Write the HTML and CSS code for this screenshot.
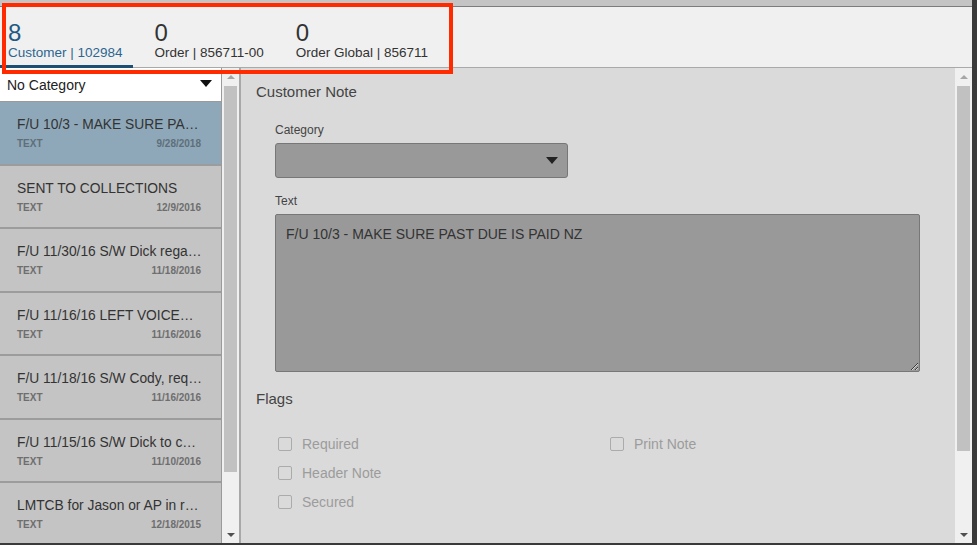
FILE: index.html
```html
<!DOCTYPE html>
<html>
<head>
<meta charset="utf-8">
<link rel="stylesheet" href="styles.css">
</head>
<body>
<div class="window">
  <div class="topband"></div>
  <div class="header">
    <div class="tab active">
      <div class="tab-count">8</div>
      <div class="tab-label">Customer | 102984</div>
    </div>
    <div class="tab">
      <div class="tab-count">0</div>
      <div class="tab-label">Order | 856711-00</div>
    </div>
    <div class="tab">
      <div class="tab-count">0</div>
      <div class="tab-label">Order Global | 856711</div>
    </div>
  </div>
  <div class="main">
    <div class="left">
      <div class="list">
        <div class="cat-select">
          <span>No Category</span>
          <svg class="caret" width="12" height="7" viewBox="0 0 12 7"><path d="M0 0H12L6 7Z" fill="#111"/></svg>
        </div>
        <div class="item selected">
          <div class="item-title">F/U 10/3 - MAKE SURE PA…</div>
          <div class="item-meta"><span>TEXT</span><span>9/28/2018</span></div>
        </div>
        <div class="item">
          <div class="item-title">SENT TO COLLECTIONS</div>
          <div class="item-meta"><span>TEXT</span><span>12/9/2016</span></div>
        </div>
        <div class="item">
          <div class="item-title">F/U 11/30/16 S/W Dick rega…</div>
          <div class="item-meta"><span>TEXT</span><span>11/18/2016</span></div>
        </div>
        <div class="item">
          <div class="item-title">F/U 11/16/16 LEFT VOICE…</div>
          <div class="item-meta"><span>TEXT</span><span>11/16/2016</span></div>
        </div>
        <div class="item">
          <div class="item-title">F/U 11/18/16 S/W Cody, req…</div>
          <div class="item-meta"><span>TEXT</span><span>11/16/2016</span></div>
        </div>
        <div class="item">
          <div class="item-title">F/U 11/15/16 S/W Dick to c…</div>
          <div class="item-meta"><span>TEXT</span><span>11/10/2016</span></div>
        </div>
        <div class="item">
          <div class="item-title">LMTCB for Jason or AP in r…</div>
          <div class="item-meta"><span>TEXT</span><span>12/18/2015</span></div>
        </div>
      </div>
      <div class="scrollbar left-sb">
        <div class="sb-btn"><svg width="8" height="4" viewBox="0 0 8 4"><path d="M0 4H8L4 0Z" fill="#a6a6a6"/></svg></div>
        <div class="sb-thumb"></div>
        <div class="sb-track"></div>
        <div class="sb-btn"><svg width="8" height="4" viewBox="0 0 8 4"><path d="M0 0H8L4 4Z" fill="#505050"/></svg></div>
      </div>
    </div>
    <div class="detail">
      <div class="detail-body">
        <div class="section-title">Customer Note</div>
        <div class="field">
          <div class="field-label">Category</div>
          <div class="select">
            <svg class="caret" width="12" height="7" viewBox="0 0 12 7"><path d="M0 0H12L6 7Z" fill="#222"/></svg>
          </div>
        </div>
        <div class="field">
          <div class="field-label">Text</div>
          <textarea class="note-text" readonly>F/U 10/3 - MAKE SURE PAST DUE IS PAID NZ</textarea>
        </div>
        <div class="section-title flags-title">Flags</div>
        <div class="flags">
          <div class="flag-col">
            <label class="flag"><span class="box"></span>Required</label>
            <label class="flag"><span class="box"></span>Header Note</label>
            <label class="flag"><span class="box"></span>Secured</label>
          </div>
          <div class="flag-col">
            <label class="flag"><span class="box"></span>Print Note</label>
          </div>
        </div>
      </div>
      <div class="scrollbar right-sb">
        <div class="sb-btn"><svg width="8" height="4" viewBox="0 0 8 4"><path d="M0 4H8L4 0Z" fill="#a6a6a6"/></svg></div>
        <div class="sb-thumb"></div>
        <div class="sb-track"></div>
        <div class="sb-btn"><svg width="8" height="4" viewBox="0 0 8 4"><path d="M0 0H8L4 4Z" fill="#505050"/></svg></div>
      </div>
    </div>
  </div>
  <div class="annotation"></div>
</div>
</body>
</html>
```
FILE: styles.css
```css
* { box-sizing: border-box; }
html, body { margin: 0; padding: 0; }
body {
  width: 977px;
  height: 545px;
  overflow: hidden;
  background: #3a3a3a;
  font-family: "Liberation Sans", Arial, sans-serif;
}
.window {
  position: relative;
  width: 972px;
  height: 543px;
  display: flex;
  flex-direction: column;
  background: #dadada;
}
.topband {
  height: 7px;
  background: #c4c4c4;
  border-bottom: 1px solid #7c7c7c;
  flex: none;
}
.header {
  flex: none;
  height: 61px;
  background: #f0f0f0;
  border-bottom: 1px solid #a9a9a9;
  display: flex;
  align-items: flex-end;
  gap: 14px;
  padding-top: 12px;
}
.tab {
  padding: 0 10px 4px 8px;
  border-bottom: 3px solid transparent;
  margin-bottom: -1px;
  color: #333;
}
.tab.active {
  border-bottom-color: #1d4f72;
  color: #2c6690;
}
.tab-count {
  font-size: 24px;
  line-height: 24px;
}
.tab.active .tab-count { color: #1f5a84; }
.tab-label {
  font-size: 13.5px;
  line-height: 16px;
}
.main {
  flex: 1;
  display: flex;
  min-height: 0;
}
.left {
  width: 241px;
  flex: none;
  display: flex;
  border-right: 2px solid #a8a8a8;
  background: #f0f0f0;
}
.list {
  width: 222px;
  flex: none;
  background: #c4c4c4;
  border-right: 1px solid #9a9a9a;
  overflow: hidden;
}
.cat-select {
  height: 34px;
  background: #fff;
  border-bottom: 1px solid #9a9a9a;
  display: flex;
  align-items: center;
  justify-content: space-between;
  padding: 1px 9px 0 7px;
  font-size: 14px;
  color: #222;
}
.cat-select .caret { margin-top: -3px; }
.item {
  height: 63.5px;
  padding: 14px 20px 0 17px;
  border-bottom: 2px solid #9c9c9c;
  background: #c4c4c4;
}
.item.selected { background: #8ea8b9; }
.item-title {
  font-size: 13.8px;
  line-height: 18px;
  color: #333;
  white-space: nowrap;
}
.item-meta {
  margin-top: 3px;
  display: flex;
  justify-content: space-between;
  font-size: 10px;
  line-height: 14px;
  color: #6e6e6e;
  font-weight: bold;
}
.item.selected .item-meta { color: #5f6f7a; }
.scrollbar {
  width: 17px;
  flex: none;
  display: flex;
  flex-direction: column;
  background: #f0f0f0;
}
.sb-btn {
  height: 17px;
  display: flex;
  align-items: center;
  justify-content: center;
  flex: none;
}
.sb-thumb {
  background: #c1c1c1;
  margin: 1px 2px 0;
  flex: none;
}
.sb-track { flex: 1; }
.left-sb .sb-thumb { height: 386px; }
.detail {
  flex: 1;
  display: flex;
  background: #dadada;
}
.detail-body {
  flex: 1;
  padding: 14px 0 0 15px;
  color: #444;
}
.section-title {
  font-size: 15px;
  line-height: 20px;
  color: #444;
}
.field {
  margin-left: 19px;
  margin-top: 20px;
  width: 645px;
}
.field + .field { margin-top: 15px; }
.field-label {
  font-size: 12px;
  line-height: 16px;
  color: #444;
  margin-bottom: 5px;
}
.select {
  width: 293px;
  height: 35px;
  background: #999;
  border: 1px solid #777;
  border-radius: 3px;
  display: flex;
  align-items: center;
  justify-content: flex-end;
  padding-right: 9px;
}
.note-text {
  display: block;
  width: 645px;
  height: 158px;
  background: #999;
  border: 1px solid #777;
  border-radius: 2px;
  padding: 10px 10px;
  font-family: "Liberation Sans", Arial, sans-serif;
  font-size: 14px;
  line-height: 18px;
  color: #333;
  resize: both;
  outline: none;
  margin: 0;
}
.flags-title { margin-top: 17px; }
.flags {
  margin-top: 20px;
  margin-left: 22px;
  display: flex;
}
.flag-col {
  display: flex;
  flex-direction: column;
}
.flag-col:first-child { width: 332px; }
.flag {
  height: 29px;
  display: flex;
  align-items: center;
  font-size: 14px;
  color: #9c9c9c;
}
.box {
  width: 14px;
  height: 14px;
  border: 1px solid #ababab;
  border-radius: 2px;
  margin-right: 10px;
  background: #dadada;
}
.right-sb .sb-btn:first-child { height: 18px; }
.right-sb .sb-thumb { height: 365px; margin-top: 0; }
.annotation {
  position: absolute;
  left: 2px;
  top: 3px;
  width: 451px;
  height: 71px;
  border: 4px solid #ff2a00;
  pointer-events: none;
}
```
